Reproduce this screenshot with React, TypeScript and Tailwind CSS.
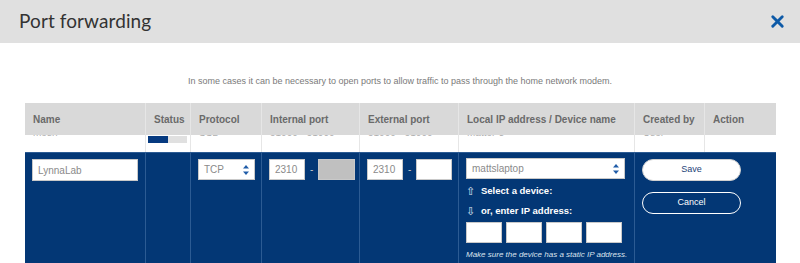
import { X } from 'lucide-react'

const COLS = 'grid grid-cols-[120px_45px_71px_98px_99px_176px_70px_72px]'

const HEADERS = ['Name', 'Status', 'Protocol', 'Internal port', 'External port', 'Local IP address / Device name', 'Created by', 'Action']

function Arrows() {
  return (
    <svg width="6" height="12" viewBox="0 0 6 12" className="shrink-0">
      <path d="M3 1 L6 4.5 H0 Z" fill="#1f5ca8" />
      <path d="M3 11 L6 7.5 H0 Z" fill="#1f5ca8" />
    </svg>
  )
}

function Box({ className = '', children }: { className?: string; children?: React.ReactNode }) {
  return (
    <div className={`h-[21px] border border-[#c9c9c9] flex items-center px-[5px] text-[10px] text-[#8a8a8a] ${className}`}>
      {children}
    </div>
  )
}

export default function App() {
  return (
    <div className="w-[800px] h-[263px] overflow-hidden bg-white font-['Liberation_Sans',Arial,sans-serif]">
      <div className="h-[43px] bg-[#e0e0e0] flex items-center justify-between pl-[19px] pr-[13px]">
        <h1 className="font-['Lato',sans-serif] text-[19px] text-[#333] tracking-[0.1px] pb-[1px]">Port forwarding</h1>
        <X size={19} strokeWidth={3.6} className="text-[#0e5aa7]" />
      </div>

      <p className="text-center text-[9px] text-[#7a7a7a] mt-[32px] h-[14px]">
        In some cases it can be necessary to open ports to allow traffic to pass through the home network modem.
      </p>

      <div className="ml-[25px] mt-[14px] w-[751px]">
        <div className={`${COLS} h-[32px] bg-[#d9d9d9] text-[10px] font-bold text-[#6a6a6a]`}>
          {HEADERS.map((h, i) => (
            <div key={h} className={`flex items-center px-[8px] ${i > 0 ? 'border-l border-[#e6e6e6]' : ''}`}>{h}</div>
          ))}
        </div>

        {/* scrolled row, mostly hidden under the sticky header */}
        <div className="h-[17px] overflow-hidden">
          <div className={`${COLS} h-[17px] text-[10px] leading-[12px] text-[#b0b0b0]`}>
            <div className="px-[8px] -mt-[8px]">mesh</div>
            <div className="border-l border-[#e6e6e6] px-[2px] pt-[1px]">
              <div className="flex h-[7px] w-[39px]">
                <div className="w-[20px] bg-[#063a80]" />
                <div className="flex-1 bg-[#e0e0e0]" />
              </div>
            </div>
            <div className="border-l border-[#e6e6e6] px-[8px] -mt-[8px]">SSL</div>
            <div className="border-l border-[#e6e6e6] px-[8px] -mt-[8px]">51000 - 51000</div>
            <div className="border-l border-[#e6e6e6] px-[8px] -mt-[8px]">51000 - 51000</div>
            <div className="border-l border-[#e6e6e6] px-[8px] -mt-[8px]">Matter-3</div>
            <div className="border-l border-[#e6e6e6] px-[8px] -mt-[8px]">User</div>
            <div className="border-l border-[#e6e6e6]" />
          </div>
        </div>

        <div className={`${COLS} h-[120px] bg-[#033775] border-t border-[#2c5b93]`}>
          <div className="pt-[6px] pl-[7px] pr-[7px]">
            <Box className="bg-white h-[22px]">LynnaLab</Box>
          </div>
          <div className="border-l border-[#2c5b93]" />
          <div className="border-l border-[#2c5b93] pt-[6px] pl-[7px] pr-[6px]">
            <Box className="bg-white h-[20px] justify-between">
              <span className="text-[10px]">TCP</span>
              <Arrows />
            </Box>
          </div>
          <div className="border-l border-[#2c5b93] pt-[6px] pl-[7px] flex items-start gap-[5px]">
            <Box className="bg-white w-[36px]">2310</Box>
            <span className="text-[#c9c9c9] text-[10px] leading-[21px]">-</span>
            <Box className="bg-[#c0c0c0] w-[37px]" />
          </div>
          <div className="border-l border-[#2c5b93] pt-[6px] pl-[7px] flex items-start gap-[5px]">
            <Box className="bg-white w-[36px]">2310</Box>
            <span className="text-[#c9c9c9] text-[10px] leading-[21px]">-</span>
            <Box className="bg-white w-[36px]" />
          </div>
          <div className="border-l border-[#2c5b93] pt-[5px] pl-[7px] pr-[9px] flex flex-col">
            <Box className="bg-white h-[20px] justify-between">
              <span>mattslaptop</span>
              <Arrows />
            </Box>
            <div className="mt-[6px] h-[12px] leading-[12px] text-[9.5px] font-bold text-white flex items-center gap-[6px]">
              <span className="font-normal text-[11px] text-[#dfe6f0]">⇧</span>Select a device:
            </div>
            <div className="mt-[8px] h-[12px] leading-[12px] text-[9.5px] font-bold text-white flex items-center gap-[6px]">
              <span className="font-normal text-[11px] text-[#dfe6f0]">⇩</span>or, enter IP address:
            </div>
            <div className="mt-[5px] flex gap-[4px]">
              <Box className="bg-white w-[36px] h-[21px]" />
              <Box className="bg-white w-[36px] h-[21px]" />
              <Box className="bg-white w-[36px] h-[21px]" />
              <Box className="bg-white w-[36px] h-[21px]" />
            </div>
            <div className="mt-[7px] leading-[10px] text-[8px] italic text-[#dbe3ee] whitespace-nowrap">
              Make sure the device has a static IP address.
            </div>
          </div>
          <div className="col-span-2 border-l border-[#2c5b93] pt-[6px] pl-[7px] flex flex-col gap-[11px]">
            <button className="w-[99px] h-[22px] rounded-full bg-white border border-[#d0d0d0] text-[9px] text-[#1c3f78]">Save</button>
            <button className="w-[99px] h-[22px] rounded-full border-[1.5px] border-white text-[9px] text-white">Cancel</button>
          </div>
        </div>
      </div>
    </div>
  )
}
